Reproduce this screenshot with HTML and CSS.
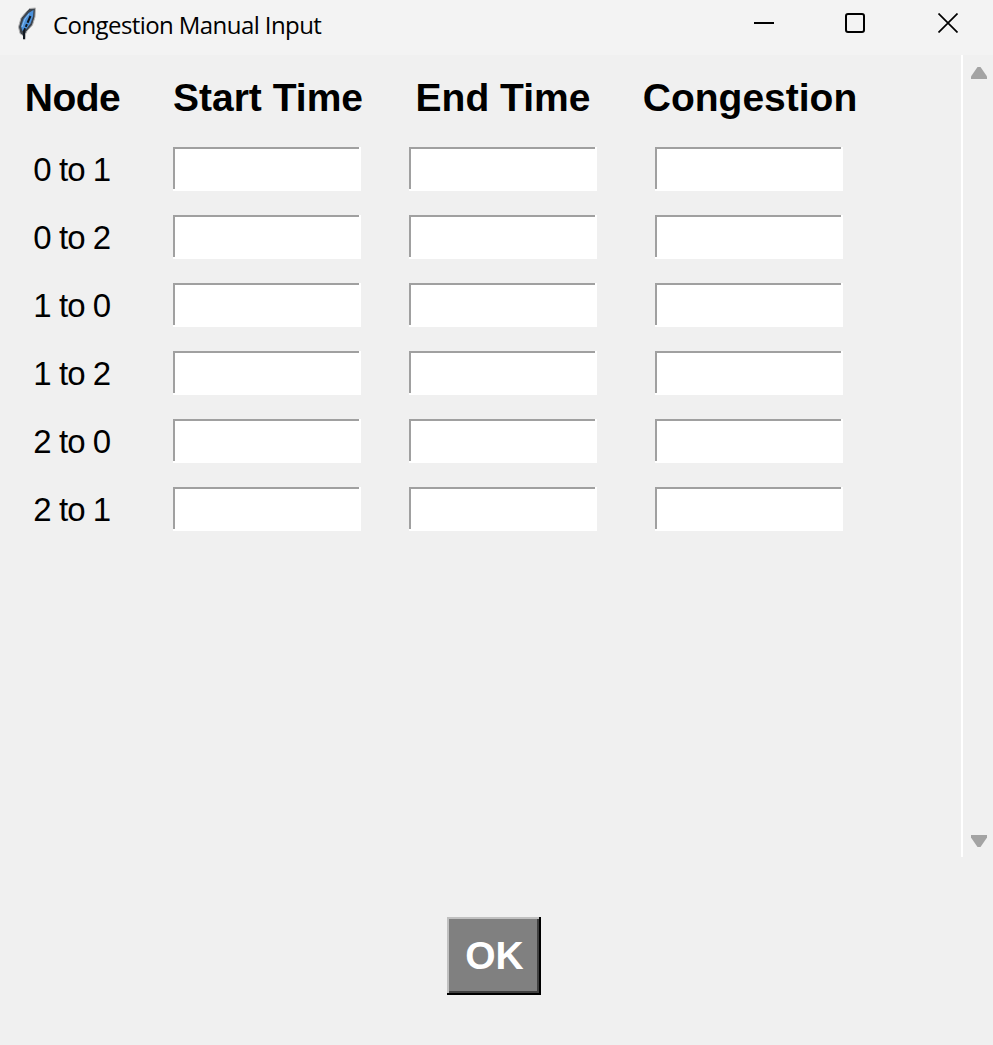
FILE: index.html
```html
<!DOCTYPE html>
<html lang="en">
<head>
<meta charset="utf-8">
<title>Congestion Manual Input</title>
<link rel="stylesheet" href="styles.css">
</head>
<body>
<div class="window">
  <header class="titlebar">
    <svg class="feather" width="22" height="34" viewBox="0 0 22 34">
      <path d="M6.500 29 3 26.500 1.500 20 4 11 9.500 4.500 12.500 1.500 18.500 1 18 10 15.500 18 10 24 8.500 27 8 32.500H6.500z" fill="#3d444d" stroke="#b5b5b5" stroke-width="1"/>
      <path d="M5.500 24 4 19.500 6.500 12 11.500 6 16.500 3 16 9.500 13.500 16.500 8.500 23z" fill="#4b91dc"/>
      <path d="M7 32V24L10 17 13.500 9" fill="none" stroke="#111820" stroke-width="2" stroke-dasharray="11 1.500 3 1.500"/>
      <path d="M5 20 8 12 12 7" fill="none" stroke="#8bbdeb" stroke-width="1"/>
    </svg>
    <span class="title">Congestion Manual Input</span>
    <div class="controls">
      <svg width="20" height="20" viewBox="0 0 20 20"><path d="M0 10H20" stroke="#000" stroke-width="2"/></svg>
      <svg width="20" height="20" viewBox="0 0 20 20"><rect x="1" y="1" width="18" height="18" rx="2" fill="none" stroke="#000" stroke-width="2"/></svg>
      <svg width="20" height="20" viewBox="0 0 20 20"><path d="M.5.5l19 19M19.500.5l-19 19" stroke="#000" stroke-width="1.700"/></svg>
    </div>
  </header>
  <main class="body">
    <div class="form">
      <div class="row head"><b class="h-node">Node</b><b class="h-start">Start Time</b><b>End Time</b><b class="h-cong">Congestion</b></div>
      <div class="row"><label>0 to 1</label><input><input><input></div>
      <div class="row"><label>0 to 2</label><input><input><input></div>
      <div class="row"><label>1 to 0</label><input><input><input></div>
      <div class="row"><label>1 to 2</label><input><input><input></div>
      <div class="row"><label>2 to 0</label><input><input><input></div>
      <div class="row"><label>2 to 1</label><input><input><input></div>
    </div>
    <div class="scrollbar">
      <svg width="16" height="12" viewBox="0 0 16 12"><path d="M0 12V9.500L6.500 0h3L16 9.500V12z" fill="#a3a3a3"/></svg>
      <svg width="16" height="12" viewBox="0 0 16 12"><path d="M0 0V2.500L6.500 12h3L16 2.500V0z" fill="#a3a3a3"/></svg>
    </div>
  </main>
  <footer class="footer"><button class="ok">OK</button></footer>
</div>
</body>
</html>
```
FILE: styles.css
```css
* { box-sizing: border-box; }
body {
  margin: 0;
  background: #f0f0f0;
  color: #000;
  font-family: "Liberation Sans", Arial, sans-serif;
}
.window {
  display: flex;
  flex-direction: column;
  width: 993px;
  height: 1045px;
  overflow: hidden;
}
.titlebar {
  display: flex;
  height: 55px;
  padding: 7px 35px 0 17px;
  background: #f3f3f3;
}
.feather { flex: none; }
.title {
  margin-left: 14px;
  font: 24px/36px "Open Sans", "Noto Sans", sans-serif;
  letter-spacing: -0.58px;
  white-space: nowrap;
}
.controls {
  display: flex;
  gap: 71px;
  margin-left: auto;
  padding-top: 6px;
}
.controls svg:last-child { margin-left: 2px; }
.body { display: flex; height: 802px; }
.form { width: 961px; padding-top: 10px; }
.row {
  display: grid;
  grid-template-columns: 145px 244px 228px 264px;
  place-items: center;
  height: 68px;
}
.head {
  height: 70px;
  padding-bottom: 4px;
  font-size: 39px;
  line-height: 44px;
  white-space: nowrap;
}
.h-start, .h-cong { padding-left: 2px; }
.h-node { letter-spacing: -0.5px; }
.row label {
  padding: 2px 1.5px 0 0;
  font-size: 33px;
  letter-spacing: -0.9px;
  line-height: 44px;
}
.row input {
  width: 188px;
  height: 44px;
  padding: 2px 4px;
  border: 0;
  outline: 0;
  font: 33px "Liberation Sans", Arial, sans-serif;
  background:
    linear-gradient(#a0a0a0, #a0a0a0) 0 0 / 186px 2px no-repeat,
    linear-gradient(#a0a0a0, #a0a0a0) 0 0 / 2px 42px no-repeat,
    #fff;
}
.scrollbar {
  display: flex;
  flex-direction: column;
  justify-content: space-between;
  align-items: center;
  width: 32px;
  padding: 12px 0 10px 2px;
  border-left: 2px solid #fff;
}
.footer { padding: 60px 0 0 447px; }
.ok {
  display: block;
  width: 94px;
  height: 78px;
  padding: 0 0 0 1px;
  border: 0;
  background: #808080;
  box-shadow: inset -2px -2px #000, inset 2px 2px #c0c0c0, inset -4px -4px #404040;
  color: #fff;
  font: bold 39px/76px "Liberation Sans", Arial, sans-serif;
}
```
